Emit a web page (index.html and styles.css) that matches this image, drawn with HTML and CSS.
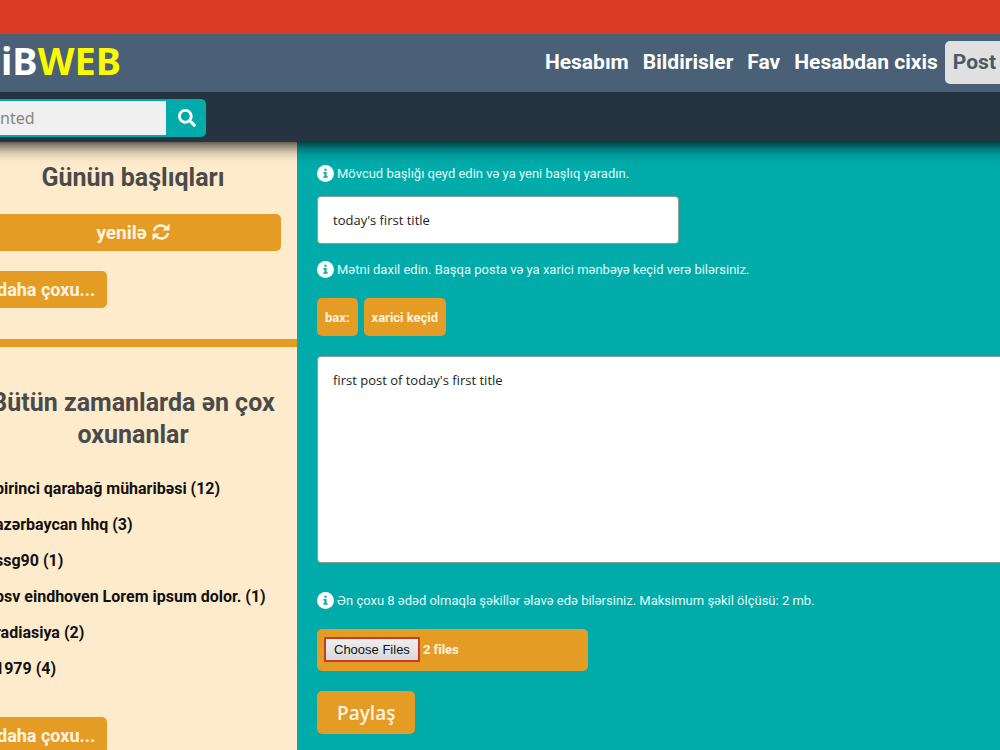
FILE: index.html
```html
<!DOCTYPE html>
<html lang="az">
<head>
    <meta charset="UTF-8">
    <meta name="viewport" content="width=device-width, initial-scale=1.0">
    <title>iBWEB</title>
    <link rel="stylesheet" href="styles.css">
</head>
<body>
    <div class="page">
        <div class="topbar"></div>
        <header class="header">
            <a href="#" class="logo">iB<span>WEB</span></a>
            <nav class="nav">
                <a href="#">Hesabım</a>
                <a href="#">Bildirisler</a>
                <a href="#">Fav</a>
                <a href="#">Hesabdan cixis</a>
                <a href="#" class="post">Post</a>
            </nav>
        </header>
        <form class="search">
            <input type="text" placeholder="nted" aria-label="nted">
            <button type="button" aria-label="nted">
                <svg viewBox="0 0 512 512" width="18" height="18"><path fill="#fff" d="M505 442.700L405.300 343c-4.500-4.500-10.600-7-17-7H372c27.600-35.300 44-79.700 44-128C416 93.100 322.900 0 208 0S0 93.100 0 208s93.100 208 208 208c48.300 0 92.700-16.400 128-44v16.300c0 6.400 2.500 12.500 7 17l99.700 99.700c9.400 9.400 24.600 9.400 33.900 0l28.300-28.300c9.400-9.400 9.400-24.600.1-34zM208 336c-70.700 0-128-57.200-128-128 0-70.700 57.200-128 128-128 70.700 0 128 57.200 128 128 0 70.700-57.200 128-128 128z"/></svg>
            </button>
        </form>
        <div class="content">
            <aside class="sidebar">
                <section class="today">
                    <h2>Günün başlıqları</h2>
                    <button type="button" class="btn refresh">yenilə
                        <svg viewBox="0 0 18 18" width="18" height="18"><g fill="none" stroke="#fff4e0" stroke-width="2.400"><path d="M2 8C3 2.500 10 .5 14.500 5"/><path d="M16 10c-1 5.500-8 7.500-12.500 3"/></g><path fill="#fff4e0" d="M17.500 .5v7h-7zM.5 17.500v-7h7z"/></svg>
                    </button>
                    <button type="button" class="btn">daha çoxu...</button>
                </section>
                <section class="popular">
                    <h2>Bütün zamanlarda ən çox oxunanlar</h2>
                    <ul>
                        <li><a href="#">birinci qarabağ müharibəsi (12)</a></li>
                        <li><a href="#">azərbaycan hhq (3)</a></li>
                        <li><a href="#">ssg90 (1)</a></li>
                        <li><a href="#">psv eindhoven Lorem ipsum dolor. (1)</a></li>
                        <li><a href="#">radiasiya (2)</a></li>
                        <li><a href="#">1979 (4)</a></li>
                    </ul>
                    <button type="button" class="btn">daha çoxu...</button>
                </section>
            </aside>
            <main class="main">
                <form class="post-form">
                    <label for="title" class="info"><svg viewBox="0 0 16 16" width="17" height="17"><circle cx="8" cy="8" r="8" fill="#fff"/><path fill="#00abaa" d="M7 3.500h2v2H7zM6 6.700h3v4h1v1.400H6v-1.400h1V8.100H6z"/></svg>Mövcud başlığı qeyd edin və ya yeni başlıq yaradın.</label>
                    <input type="text" id="title" class="field title" value="today's first title">
                    <label for="text" class="info"><svg viewBox="0 0 16 16" width="17" height="17"><circle cx="8" cy="8" r="8" fill="#fff"/><path fill="#00abaa" d="M7 3.500h2v2H7zM6 6.700h3v4h1v1.400H6v-1.400h1V8.100H6z"/></svg>Mətni daxil edin. Başqa posta və ya xarici mənbəyə keçid verə bilərsiniz.</label>
                    <div class="tools">
                        <button type="button">bax:</button>
                        <button type="button">xarici keçid</button>
                    </div>
                    <textarea id="text" class="field">first post of today's first title</textarea>
                    <label for="files" class="info"><svg viewBox="0 0 16 16" width="17" height="17"><circle cx="8" cy="8" r="8" fill="#fff"/><path fill="#00abaa" d="M7 3.500h2v2H7zM6 6.700h3v4h1v1.400H6v-1.400h1V8.100H6z"/></svg>Ən çoxu 8 ədəd olmaqla şəkillər əlavə edə bilərsiniz. Maksimum şəkil ölçüsü: 2 mb.</label>
                    <input type="file" id="files" class="files" multiple>
                    <button type="button" class="submit">Paylaş</button>
                </form>
            </main>
        </div>
    </div>
    <script>
        const dt = new DataTransfer();
        dt.items.add(new File(["1"], "1.jpg"));
        dt.items.add(new File(["2"], "2.jpg"));
        document.querySelector("#files").files = dt.files;
    </script>
</body>
</html>
```

FILE: styles.css
```css
* {
    box-sizing: border-box;
}
body {
    margin: 0;
    overflow-x: hidden;
    font-family: "Roboto", "Liberation Sans", sans-serif;
}
a {
    text-decoration: none;
}
button, input, textarea {
    font-family: inherit;
}
.page {
    display: flex;
    flex-direction: column;
    min-height: 100vh;
    margin: 0 -31px;
}
.topbar {
    height: 34px;
    background-color: #da3b22;
}
.header {
    display: flex;
    position: relative;
    z-index: 2;
    justify-content: space-between;
    align-items: flex-start;
    height: 58px;
    padding: 0 27px 0 32px;
    background-color: #4a6077;
}
.logo {
    font-family: "Noto Sans", sans-serif;
    font-size: 38px;
    font-weight: bold;
    line-height: 52px;
    color: #fff;
}
.logo span {
    color: #fdf900;
}
.nav {
    display: flex;
    padding-top: 7px;
    font-size: 21px;
    font-weight: bold;
}
.nav a {
    padding: 0 7px;
    line-height: 43px;
    color: #fff;
}
.nav .post {
    padding: 0 8px;
    border-radius: 5px;
    background-color: #e0e0e0;
    color: #485a66;
}
.search {
    display: flex;
    position: relative;
    z-index: 1;
    height: 50px;
    padding: 7px 31px 5px;
    background-color: #263340;
    box-shadow: 0 2px 18px #000;
}
.search input {
    width: 168px;
    padding: 0;
    border: 2px solid #00abaa;
    border-left: 0;
    background-color: #f0f0f0;
    font-family: "Noto Sans", sans-serif;
    font-size: 16px;
}
.search input::placeholder {
    color: #858585;
}
.search button {
    display: flex;
    align-items: center;
    justify-content: center;
    width: 38px;
    border: 0;
    border-radius: 0 5px 5px 0;
    background-color: #00abaa;
}
.content {
    display: flex;
    flex: 1;
}
.sidebar {
    width: 328px;
    background-color: #feebcc;
}
.sidebar section {
    padding: 20px 16px;
}
.sidebar h2 {
    margin: 0;
    font-size: 25px;
    line-height: 32px;
    text-align: center;
    color: #4a4a4a;
}
.sidebar .today {
    padding-bottom: 31px;
    border-bottom: 8px solid #e59c24;
}
.sidebar .popular {
    padding-top: 40px;
}
.btn {
    display: block;
    height: 37px;
    padding: 0 12px;
    border: 0;
    border-radius: 5px;
    background-color: #e59c24;
    font-size: 18px;
    font-weight: bold;
    color: #fff4e0;
}
.refresh {
    width: 100%;
    margin: 20px 0;
    font-size: 19px;
}
.refresh svg {
    vertical-align: -2px;
}
.sidebar ul {
    list-style-type: none;
    margin: 20px 0 30px;
    padding: 0 0 0 10px;
}
.sidebar li {
    line-height: 36px;
}
.sidebar li a {
    font-size: 16px;
    font-weight: bold;
    white-space: nowrap;
    color: #111;
}
.main {
    flex: 1;
    min-width: 0;
    padding: 20px;
    background-color: #00abaa;
}
.post-form {
    display: flex;
    flex-direction: column;
    align-items: flex-start;
}
.info {
    display: flex;
    align-items: center;
    gap: 3px;
    height: 22px;
    font-size: 13px;
    color: #e0fbf8;
}
.field {
    border: 1px solid #8f9c98;
    border-radius: 4px;
    background-color: #fff;
    font-family: "Open Sans", "Noto Sans", sans-serif;
    font-size: 13px;
    color: #222;
}
.title {
    width: 362px;
    height: 48px;
    margin: 12px 0 14px;
    padding: 0 15px;
}
.tools {
    display: flex;
    gap: 6px;
    margin: 18px 0 20px;
}
.tools button {
    height: 38px;
    padding: 0 8px;
    border: 0;
    border-radius: 5px;
    background-color: #e59c24;
    font-size: 13px;
    font-weight: bold;
    color: #fff4e0;
}
textarea.field {
    display: block;
    width: 100%;
    height: 207px;
    margin-bottom: 26px;
    padding: 14px 15px;
    resize: none;
}
.files {
    width: 271px;
    height: 42px;
    margin: 18px 0 20px;
    padding: 8px 7px;
    border-radius: 5px;
    background-color: #e59c24;
    font-size: 13px;
    font-weight: bold;
    color: #fff4e0;
}
.files::file-selector-button {
    height: 25px;
    margin: 0 3px 0 0;
    padding: 0 8px;
    border: 2px solid #c93a2b;
    background: linear-gradient(#efefef, #d8d8d8);
    font-family: "Liberation Sans", sans-serif;
    font-size: 13px;
    font-weight: normal;
    color: #111;
}
.submit {
    height: 43px;
    padding: 0 20px;
    border: 0;
    border-radius: 5px;
    background-color: #e59c24;
    font-family: "Open Sans", "Noto Sans", sans-serif;
    font-size: 19px;
    font-weight: 600;
    color: #fff4e0;
}
```
